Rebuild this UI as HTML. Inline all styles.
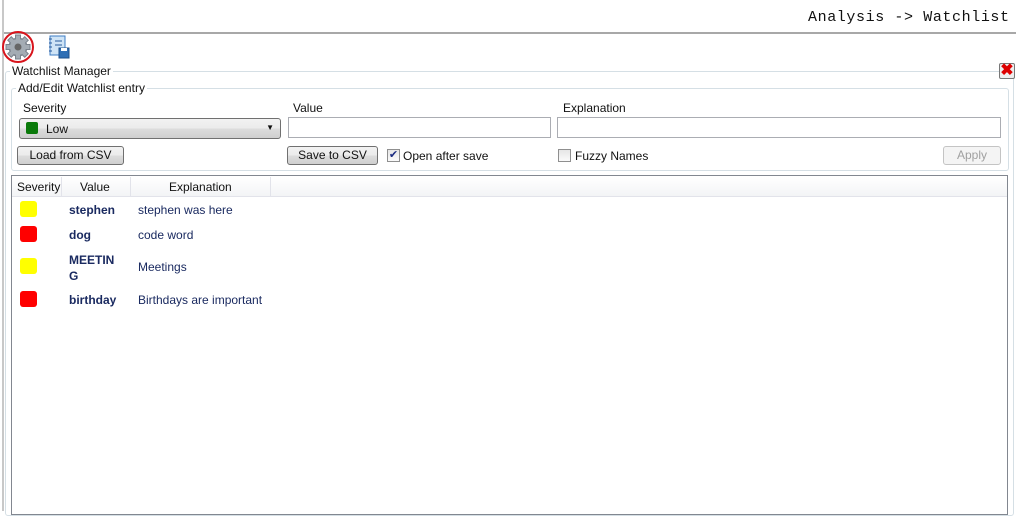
<!DOCTYPE html><html><head><style>
*{box-sizing:border-box}body{margin:0;width:1018px;height:511px;background:#fff;font-family:"Liberation Sans",sans-serif;font-size:12px;color:#111;position:relative;overflow:hidden}
.a{position:absolute}
.btn{position:absolute;border:1px solid #707070;border-radius:3px;background:linear-gradient(#f2f2f2,#ebebeb 50%,#dddddd 50%,#cfcfcf);text-align:center;line-height:17px;font-size:12px}
.tb{position:absolute;border:1px solid #abadb3;background:#fff;height:21px}
.sq{position:absolute;left:20px;width:17px;height:16px;border-radius:3px}
.v{position:absolute;left:69px;font-weight:bold;color:#1a2a60}
.e{position:absolute;left:138px;color:#1a2a60}
.cb{position:absolute;width:13px;height:13px;border:1px solid #8f8f8f;background:linear-gradient(#e6e6e6,#fafafa)}
</style></head><body>
<div class="a" style="left:2px;top:0;width:2px;height:511px;background:#c8c8c8"></div>
<div class="a" style="left:4px;top:32px;width:1012px;height:2px;background:#a8a8a8"></div>
<div class="a" style="left:808px;top:9px;font-family:'Liberation Mono',monospace;font-size:15px;letter-spacing:0.6px">Analysis -&gt; Watchlist</div>
<svg class="a" style="left:1px;top:31px" width="34" height="33"><g transform="translate(17,16)"><g fill="#a4acb4" stroke="#7a828c" stroke-width="1"><circle r="9"/><g><rect x="-2.5" y="-12" width="5" height="24"/><rect x="-2.5" y="-12" width="5" height="24" transform="rotate(45)"/><rect x="-2.5" y="-12" width="5" height="24" transform="rotate(90)"/><rect x="-2.5" y="-12" width="5" height="24" transform="rotate(135)"/></g><circle r="8" stroke="none"/></g><circle r="3.5" fill="#666"/><circle r="15" fill="none" stroke="#d8141c" stroke-width="2"/></g></svg>
<svg class="a" style="left:47px;top:35px" width="24" height="24"><rect x="3" y="1" width="15" height="19" fill="#cfe4f6" stroke="#3d7cc4"/><g stroke="#2a5a9a"><line x1="2" y1="4" x2="5" y2="4"/><line x1="2" y1="8" x2="5" y2="8"/><line x1="2" y1="12" x2="5" y2="12"/><line x1="2" y1="16" x2="5" y2="16"/><line x1="8" y1="6" x2="15" y2="6"/><line x1="8" y1="10" x2="15" y2="10"/></g><rect x="12" y="13" width="10" height="10" fill="#2f6fb5" stroke="#1d4f8a"/><rect x="14" y="13" width="6" height="3" fill="#fff"/></svg>
<div class="a" style="left:5px;top:71px;width:1009px;height:445px;border:1px solid #d5dfe5;border-radius:3px"></div>
<div class="a" style="left:10px;top:64px;background:#fff;padding:0 2px;font-size:12px">Watchlist Manager</div>
<div class="a" style="left:999px;top:63px;width:16px;height:16px;border:1px solid #777;border-radius:2px;background:#eee;color:#d00;font-weight:bold;font-size:16px;line-height:14px;text-align:center">✖</div>
<div class="a" style="left:11px;top:88px;width:998px;height:83px;border:1px solid #d5dfe5;border-radius:3px"></div>
<div class="a" style="left:16px;top:81px;background:#fff;padding:0 2px">Add/Edit Watchlist entry</div>
<div class="a" style="left:23px;top:101px">Severity</div>
<div class="a" style="left:293px;top:101px">Value</div>
<div class="a" style="left:563px;top:101px">Explanation</div>
<div class="btn" style="left:19px;top:118px;width:262px;height:21px;text-align:left"><span class="a" style="left:6px;top:3px;width:12px;height:12px;background:#0a7a0a;border-radius:2px"></span><span class="a" style="left:26px;top:2px">Low</span><span class="a" style="right:6px;top:0;font-size:8px">▼</span></div>
<div class="tb" style="left:288px;top:117px;width:263px"></div>
<div class="tb" style="left:557px;top:117px;width:444px"></div>
<div class="btn" style="left:17px;top:146px;width:107px;height:19px">Load from CSV</div>
<div class="btn" style="left:287px;top:146px;width:91px;height:19px">Save to CSV</div>
<div class="cb" style="left:387px;top:149px;color:#1a2a80;font-size:11px;line-height:11px;text-align:center">✔</div>
<div class="a" style="left:403px;top:149px">Open after save</div>
<div class="cb" style="left:558px;top:149px"></div>
<div class="a" style="left:575px;top:149px">Fuzzy Names</div>
<div class="btn" style="left:943px;top:146px;width:58px;height:19px;border-color:#c4c4c4;background:#f4f4f4;color:#a0a0a0">Apply</div>
<div class="a" style="left:11px;top:175px;width:997px;height:340px;border:1px solid #828790"></div>
<div class="a" style="left:12px;top:177px;width:995px;height:20px;background:linear-gradient(#fff,#f3f4f6);border-bottom:1px solid #e2e3ea"></div>
<div class="a" style="left:61px;top:177px;width:1px;height:19px;background:#e2e3ea"></div>
<div class="a" style="left:130px;top:177px;width:1px;height:19px;background:#e2e3ea"></div>
<div class="a" style="left:270px;top:177px;width:1px;height:19px;background:#e2e3ea"></div>
<div class="a" style="left:17px;top:180px">Severity</div>
<div class="a" style="left:80px;top:180px">Value</div>
<div class="a" style="left:169px;top:180px">Explanation</div>
<div class="sq" style="top:201px;background:#ffff00"></div><div class="v" style="top:203px">stephen</div><div class="e" style="top:203px">stephen was here</div>
<div class="sq" style="top:226px;background:#ff0000"></div><div class="v" style="top:228px">dog</div><div class="e" style="top:228px">code word</div>
<div class="sq" style="top:258px;background:#ffff00"></div><div class="v" style="top:252px;line-height:16px">MEETIN<br>G</div><div class="e" style="top:260px">Meetings</div>
<div class="sq" style="top:291px;background:#ff0000"></div><div class="v" style="top:293px">birthday</div><div class="e" style="top:293px">Birthdays are important</div>
</body></html>
